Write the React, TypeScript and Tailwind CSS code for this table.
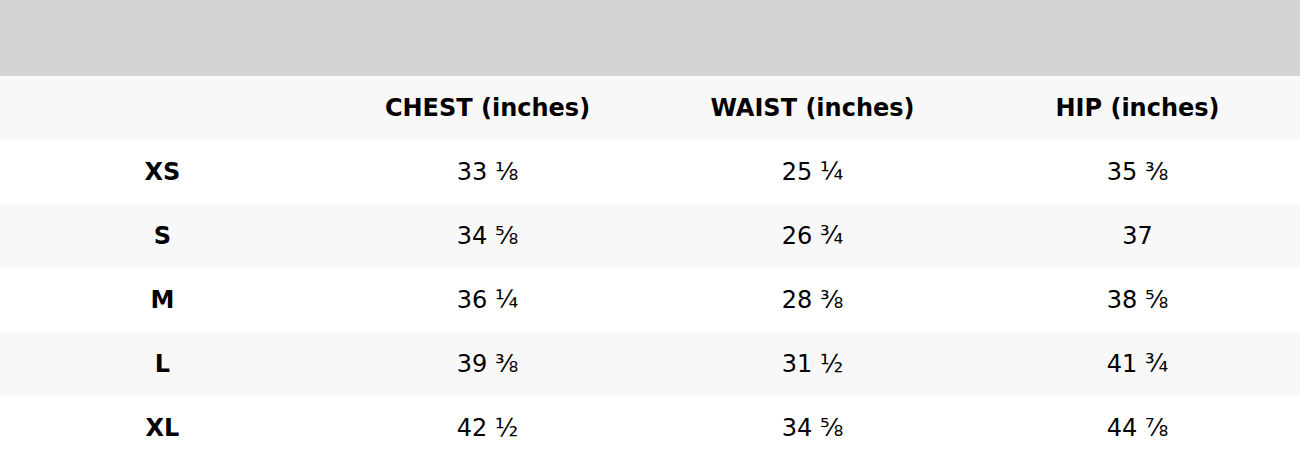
import React from "react";

const rows: [string, string, string, string][] = [
  ["XS", "33 ⅛", "25 ¼", "35 ⅜"],
  ["S", "34 ⅝", "26 ¾", "37"],
  ["M", "36 ¼", "28 ⅜", "38 ⅝"],
  ["L", "39 ⅜", "31 ½", "41 ¾"],
  ["XL", "42 ½", "34 ⅝", "44 ⅞"],
];

export default function App() {
  return (
    <div className="w-[1300px] h-[460px] bg-white text-black overflow-hidden" style={{ fontFamily: '"DejaVu Sans", sans-serif' }}>
      <div className="h-[76px] bg-[#d4d4d4]" />
      <div className="grid grid-cols-4 h-[64px] bg-[#f8f8f8] items-center text-center text-[24px] font-bold">
        <div></div>
        <div>CHEST (inches)</div>
        <div>WAIST (inches)</div>
        <div>HIP (inches)</div>
      </div>
      {rows.map((r, i) => (
        <div key={r[0]} className={`grid grid-cols-4 h-[64px] items-center text-center text-[24px] ${i % 2 === 1 ? "bg-[#f8f8f8]" : "bg-white"}`}>
          <div className="font-bold">{r[0]}</div>
          <div>{r[1]}</div>
          <div>{r[2]}</div>
          <div>{r[3]}</div>
        </div>
      ))}
    </div>
  );
}
